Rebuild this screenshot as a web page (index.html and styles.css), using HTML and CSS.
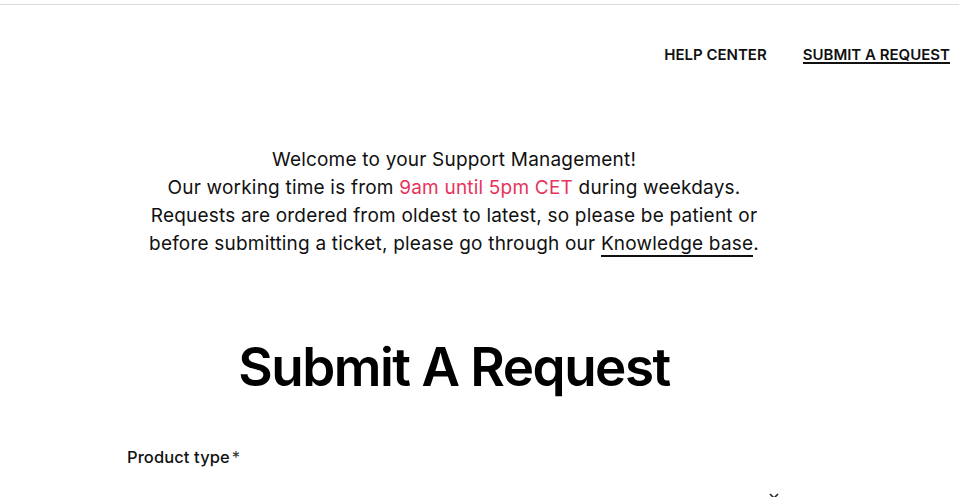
FILE: index.html
```html
<!DOCTYPE html>
<html lang="en">
<head>
<meta charset="utf-8">
<title>Submit A Request</title>
<link rel="stylesheet" href="styles.css">
</head>
<body>
<div class="topline"></div>
<header class="header">
  <nav class="nav">
    <a class="nav-link" href="#">Help Center</a>
    <a class="nav-link nav-link-active" href="#">Submit a request</a>
  </nav>
</header>
<main class="main">
  <section class="intro">
    <p class="intro-text">Welcome to your Support Management!<br>
    Our working time is from <span class="accent">9am until 5pm CET</span> during weekdays.<br>
    Requests are ordered from oldest to latest, so please be patient or<br>
    before submitting a ticket, please go through our <a class="kb-link" href="#">Knowledge base</a>.</p>
  </section>
  <h1 class="title">Submit A Request</h1>
  <form class="form">
    <div class="field">
      <label class="field-label">Product type<span class="req">*</span></label>
      <div class="select">
        <span class="select-value"></span>
        <svg class="chevron" width="10" height="6" viewBox="0 0 10 6"><path d="M1 1l4 4 4-4" fill="none" stroke="#222" stroke-width="1.6"/></svg>
      </div>
    </div>
  </form>
</main>
</body>
</html>
```
FILE: styles.css
```css
* { box-sizing: border-box; }
html, body { margin: 0; padding: 0; background: #fff; }
body {
  font-family: "Inter", "DejaVu Sans", sans-serif;
  color: #111;
}
.topline {
  height: 5px;
  border-bottom: 1px solid #dcdcdc;
}
.header {
  display: flex;
  justify-content: flex-end;
  padding: 43px 9px 0 0;
}
.nav {
  display: flex;
  gap: 36px;
}
.nav-link {
  font-size: 15px;
  font-weight: 600;
  text-transform: uppercase;
  color: #111;
  text-decoration: none;
  line-height: 14px;
  padding-bottom: 0;
  border-bottom: 2px solid transparent;
}
.nav-link-active {
  border-bottom-color: #111;
}
.main {
  width: 654px;
  margin-left: 127px;
}
.intro {
  margin-top: 82px;
  text-align: center;
}
.intro-text {
  margin: 0;
  font-size: 19px;
  letter-spacing: 0.2px;
  line-height: 28px;
  color: #111;
}
.accent { color: #e8335b; }
.kb-link {
  color: #111;
  text-decoration: none;
  border-bottom: 2px solid #111;
}
.title {
  margin: 77px 0 0;
  text-align: center;
  font-size: 53px;
  font-weight: 600;
  line-height: 64px;
  letter-spacing: -1.5px;
  color: #000;
}
.form { margin-top: 48px; }
.field-label {
  display: block;
  font-size: 16.5px;
  font-weight: 500;
  line-height: 20px;
  letter-spacing: 0.1px;
  color: #111;
}
.req { margin-left: 2px; font-weight: 400; color: #333; }
.select {
  margin-top: 7px;
  height: 44px;
  display: flex;
  justify-content: flex-end;
  align-items: flex-start;
  padding: 19px 2px 0 0;
}
```
